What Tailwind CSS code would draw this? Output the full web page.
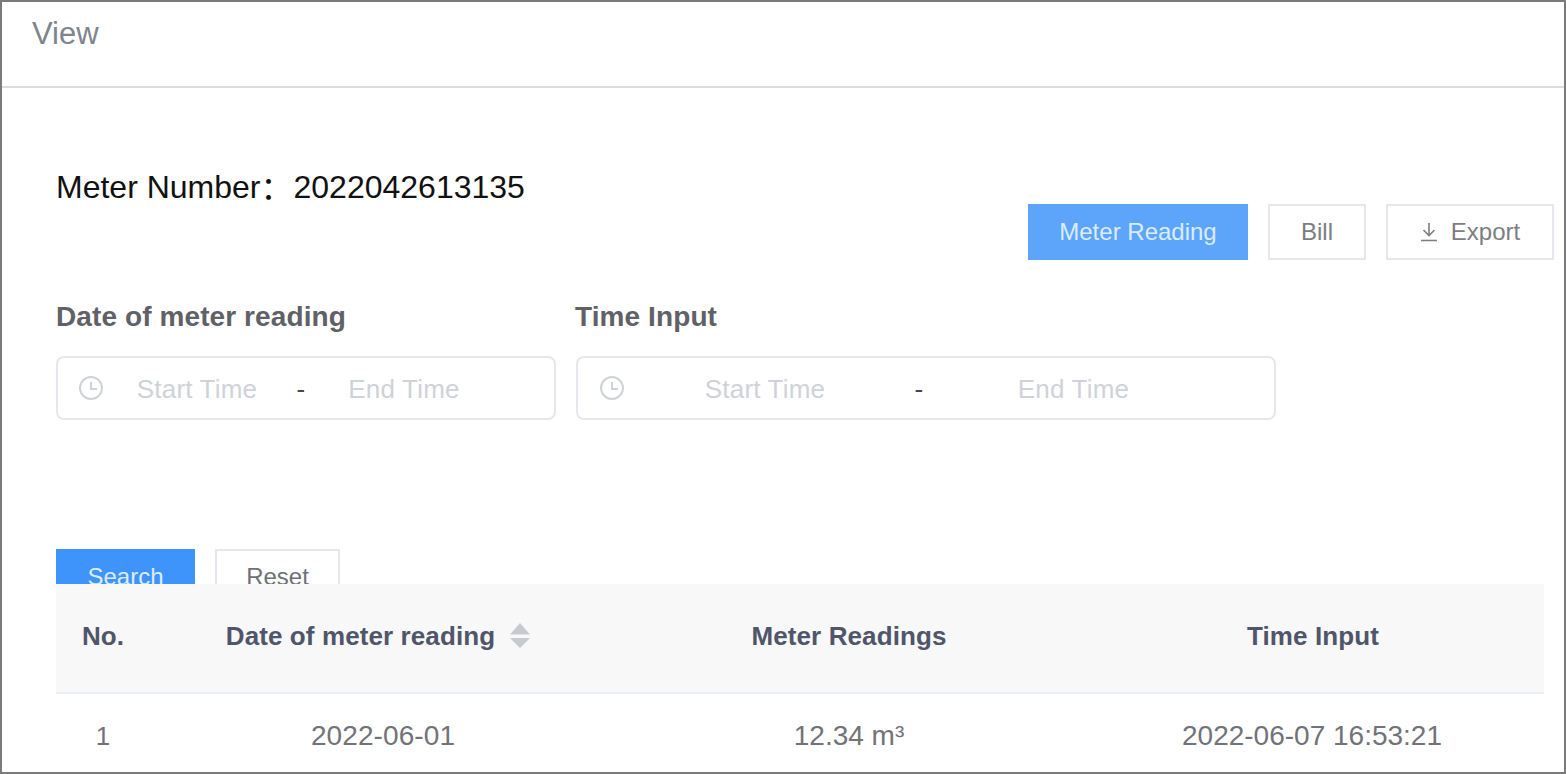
<!DOCTYPE html>
<html>
<head>
<meta charset="utf-8">
<script src="https://cdn.jsdelivr.net/npm/@tailwindcss/browser@4"></script>
</head>
<body class="bg-white font-['Liberation_Sans',Arial,sans-serif]">
<div class="h-[774px] w-[1566px] overflow-hidden border-2 border-[#7b7b7b] bg-white">
  <header class="flex h-[86px] items-start border-b-2 border-[#dcdcdc] pl-[30px] pt-[13px] text-[31px] leading-[38px] text-[#80848c]">View</header>
  <main class="pl-[54px] pr-[10px]">
    <div class="flex items-start justify-between pt-[79px]">
      <div class="flex h-[40px] items-center text-[32px] leading-[40px] text-[#111]"><span>Meter Number</span><span class="mr-[1px] h-[40px] font-['Noto_Sans_CJK_SC',sans-serif] leading-[36px]">：</span><span>2022042613135</span></div>
      <div class="mt-[37px] flex gap-5 text-[24px]">
        <button class="flex h-[56px] w-[220px] items-center justify-center bg-[#5ca5fb] text-[#dcecff]">Meter Reading</button>
        <button class="flex h-[56px] w-[98px] items-center justify-center border-2 border-[#e6e7ee] text-[#7c7e83]">Bill</button>
        <button class="flex h-[56px] w-[168px] items-center justify-center gap-[13px] border-2 border-[#e6e7ee] text-[#7c7e83]">
          <svg class="h-[20px] w-[18px]" viewBox="0 0 18 20" fill="none" stroke="#7c7e83" stroke-width="1.6"><path d="M9 1v12M3.5 8 9 13.5 14.500 8M1 18.500h16"/></svg>
          Export
        </button>
      </div>
    </div>

    <div class="mt-[39px] flex text-[28px] font-bold leading-[36px] tracking-[0.1px] text-[#5f6166]">
      <div class="w-[519px]">Date of meter reading</div>
      <div>Time Input</div>
    </div>

    <div class="mt-[21px] flex gap-5 text-center text-[26px] tracking-[0.2px] text-[#cfd2d9]">
      <div class="flex h-[64px] w-[500px] items-center rounded-lg border-2 border-[#e6e7ee] pl-[20px]">
        <svg class="h-[26px] w-[26px] shrink-0" viewBox="0 0 26 26" fill="none" stroke="#cfd2d9" stroke-width="2"><circle cx="13" cy="13" r="11"/><path d="M13 7v7h6"/></svg>
        <span class="w-[186px] pt-[2px]">Start Time</span>
        <span class="w-[22px] pt-[2px] text-[#44464a]">-</span>
        <span class="w-[184px] pt-[2px]">End Time</span>
      </div>
      <div class="flex h-[64px] w-[700px] items-center rounded-lg border-2 border-[#e6e7ee] pl-[21px]">
        <svg class="h-[26px] w-[26px] shrink-0" viewBox="0 0 26 26" fill="none" stroke="#cfd2d9" stroke-width="2"><circle cx="13" cy="13" r="11"/><path d="M13 7v7h6"/></svg>
        <span class="w-[280px] pt-[2px]">Start Time</span>
        <span class="w-[28px] pt-[2px] text-[#44464a]">-</span>
        <span class="w-[281px] pt-[2px]">End Time</span>
      </div>
    </div>

    <div class="mt-[129px] flex gap-5 text-[24px]">
      <button class="h-[56px] w-[139px] bg-[#3f94fb] text-[#dcecff]">Search</button>
      <button class="h-[56px] w-[125px] border-2 border-[#e6e7ee] text-[#6f7176]">Reset</button>
    </div>

    <div class="relative -mt-[21px] mr-[10px] bg-white text-center">
      <div class="grid h-[110px] grid-cols-[94px_456px_486px_442px_1fr] items-center border-b-2 border-[#ebeef3] bg-[#f8f8f9] pb-[4px] text-[26px] font-bold tracking-[0.1px] text-[#50566a]">
        <div>No.</div>
        <div class="flex items-center justify-center gap-[15px]">
          <span>Date of meter reading</span>
          <svg class="h-[26px] w-[20px]" viewBox="0 0 20 26" fill="#c6c9d0"><path d="M10 0 20 11.500H0zM0 15h20L10 25z"/></svg>
        </div>
        <div>Meter Readings</div>
        <div>Time Input</div>
        <div></div>
      </div>
      <div class="grid h-[78px] grid-cols-[94px_456px_486px_442px_1fr] items-center pt-[6px] text-[28px] text-[#717378]">
        <div class="text-[26px]">1</div>
        <div class="pl-[10px] tracking-[0.1px]">2022-06-01</div>
        <div>12.34 m³</div>
        <div class="pr-[2px]">2022-06-07 16:53:21</div>
        <div></div>
      </div>
    </div>
  </main>
</div>
</body>
</html>
